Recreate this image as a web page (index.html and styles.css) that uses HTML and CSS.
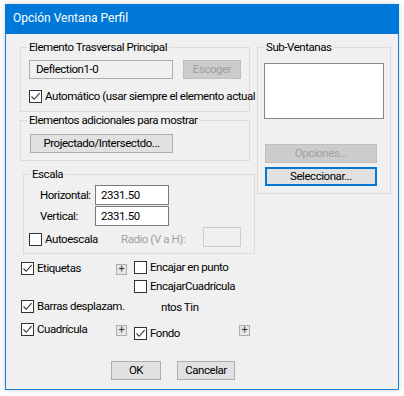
FILE: index.html
```html
<!DOCTYPE html>
<html lang="es">
<head>
<meta charset="utf-8">
<title>Opción Ventana Perfil</title>
<link rel="stylesheet" href="styles.css">
</head>
<body>
<div class="window">
  <div class="titlebar">Opción Ventana Perfil</div>
  <div class="client">
    <div class="top">
      <div class="leftcol">
        <fieldset class="group g1">
          <legend>Elemento Trasversal Principal</legend>
          <div class="elem-row">
            <div class="edit ro elem-edit">Deflection1-0</div>
            <div class="btn disabled escoger">Escoger</div>
          </div>
          <div class="check auto"><span class="box on"></span><span class="lbl">Automático (usar siempre el elemento actual</span></div>
        </fieldset>
        <fieldset class="group g2">
          <legend>Elementos adicionales para mostrar</legend>
          <div class="btn proj">Projectado/Intersectdo...</div>
        </fieldset>
        <fieldset class="group g3">
          <legend>Escala</legend>
          <div class="scale-row first">
            <span class="scale-lbl">Horizontal:</span>
            <div class="edit num">2331.50</div>
          </div>
          <div class="scale-row">
            <span class="scale-lbl">Vertical:</span>
            <div class="edit num">2331.50</div>
          </div>
          <div class="auto-row">
            <div class="check autoesc"><span class="box"></span><span class="lbl">Autoescala</span></div>
            <span class="radio-lbl">Radio (V a H):</span>
            <div class="edit dis-edit"></div>
          </div>
        </fieldset>
      </div>
      <div class="rightcol">
        <fieldset class="group g4">
          <legend>Sub-Ventanas</legend>
          <div class="listbox"></div>
          <div class="btn disabled wide opciones">Opciones...</div>
          <div class="btn focus wide selec">Seleccionar...</div>
        </fieldset>
      </div>
    </div>
    <div class="opts">
      <div class="opt-row r1">
        <div class="cell c1"><div class="check"><span class="box on"></span><span class="lbl">Etiquetas</span></div></div>
        <div class="cell c2"><span class="plus">+</span></div>
        <div class="cell c3 up1"><div class="check"><span class="box"></span><span class="lbl">Encajar en punto</span></div></div>
      </div>
      <div class="opt-row r2">
        <div class="cell c3"><div class="check"><span class="box"></span><span class="lbl">EncajarCuadrícula</span></div></div>
      </div>
      <div class="opt-row r3">
        <div class="cell c1w"><div class="check"><span class="box on"></span><span class="lbl">Barras desplazam.</span></div></div>
        <div class="cell"><span class="plain">ntos Tin</span></div>
      </div>
      <div class="opt-row r4">
        <div class="cell c1"><div class="check"><span class="box on"></span><span class="lbl">Cuadrícula</span></div></div>
        <div class="cell c2"><span class="plus">+</span></div>
        <div class="cell c3f"><div class="check down4"><span class="box on"></span><span class="lbl">Fondo</span></div></div>
        <div class="cell"><span class="plus plus2">+</span></div>
      </div>
    </div>
    <div class="actions">
      <div class="btn ok">OK</div>
      <div class="btn cancel">Cancelar</div>
    </div>
  </div>
</div>
</body>
</html>
```

FILE: styles.css
```css
* { box-sizing: border-box; }

html, body {
  margin: 0;
  padding: 0;
  background: #ffffff;
}

body {
  font-family: "Segoe UI", Roboto, "Liberation Sans", sans-serif;
  font-size: 12px;
  color: #000;
  width: 404px;
  height: 396px;
  overflow: hidden;
}

.window {
  width: 394px;
  height: 386px;
  margin: 4px 0 0 5px;
  border: 1px solid #1a7fd4;
  background: #f0f0f0;
  box-shadow: 0 0 6px rgba(0, 0, 0, 0.18);
  display: flex;
  flex-direction: column;
}

.titlebar {
  height: 30px;
  background: #0078d7;
  color: #fff;
  font-size: 12px;
  line-height: 29px;
  padding-left: 8px;
  margin: -1px -1px 0 -1px;
}

.client {
  flex: 1;
  background: #f0f0f0;
  display: flex;
  flex-direction: column;
  font-size: 11.5px;
  letter-spacing: -0.45px;
}

.top {
  display: flex;
  padding-top: 6px;
}

.leftcol {
  width: 237px;
  margin-left: 14px;
  display: flex;
  flex-direction: column;
}

.group {
  margin: 0;
  padding: 0;
  border: 1px solid #dcdcdc;
  min-width: 0;
  overflow: visible;
}

.group legend {
  margin-left: 6px;
  padding: 0 2px;
  line-height: 15px;
  height: 15px;
}

.g1 { width: 230px; height: 72px; position: relative; z-index: 1; }
.g2 { width: 230px; height: 48px; margin-top: 1px; }
.g3 { width: 232px; height: 87px; margin-top: 6px; margin-left: 3px; }
.g4 { width: 134px; height: 154px; }

.elem-row {
  display: flex;
  margin-top: 5px;
  padding-left: 8px;
}

.edit {
  height: 19px;
  border: 1px solid #7a7a7a;
  background: #fff;
  line-height: 17px;
  padding-left: 4px;
  white-space: nowrap;
}

.edit.ro {
  background: #f0f0f0;
  border-color: #adadad;
}

.elem-edit { width: 144px; padding-left: 6px; }

.btn {
  height: 19px;
  border: 1px solid #adadad;
  background: #e1e1e1;
  text-align: center;
  line-height: 17px;
  white-space: nowrap;
}

.btn.disabled {
  background: #cccccc;
  border-color: #bfbfbf;
  color: #a0a0a0;
}

.btn.focus {
  border: 2px solid #0078d7;
  line-height: 15px;
}

.escoger { width: 58px; margin-left: 10px; }

.check {
  display: flex;
  align-items: center;
  height: 13px;
  white-space: nowrap;
}

.box {
  width: 13px;
  height: 13px;
  flex: none;
  border: 1px solid #333;
  background: #fff;
  margin-right: 3px;
}

.box.on {
  background: #fff url("data:image/svg+xml;utf8,<svg xmlns='http://www.w3.org/2000/svg' width='11' height='11'><path d='M1.5 5.5 L4.2 8.3 L9.6 2.2' fill='none' stroke='%23333' stroke-width='1.1'/></svg>") no-repeat center;
}

.lbl { line-height: 15px; }

.auto {
  margin-top: 11px;
  margin-left: 8px;
  width: 260px;
}

.proj {
  width: 143px;
  margin-top: 6px;
  margin-left: 9px;
}

.scale-row {
  display: flex;
  align-items: center;
  padding-left: 16px;
  margin-top: 1px;
}

.scale-row.first { margin-top: 3px; }

.scale-lbl { width: 55px; }

.num { width: 74px; height: 20px; line-height: 18px; padding-left: 5px; }

.auto-row {
  display: flex;
  align-items: flex-start;
  margin-top: 1px;
  padding-left: 5px;
}

.autoesc { margin-top: 6px; width: 92px; }

.radio-lbl {
  color: #a0a0a0;
  margin-top: 5px;
  line-height: 15px;
  width: 82px;
}

.dis-edit {
  width: 38px;
  height: 20px;
  border-color: #cccccc;
  background: #f0f0f0;
}

.listbox {
  width: 120px;
  height: 56px;
  margin-top: 8px;
  margin-left: 6px;
  border: 1px solid #828790;
  background: #fff;
}

.wide { width: 112px; margin-left: 7px; }
.opciones { margin-top: 25px; }
.selec { margin-top: 4px; }

.opts {
  padding-left: 15px;
  margin-top: 8px;
}

.opt-row {
  display: flex;
  align-items: flex-start;
  height: 13px;
}

.cell { flex: none; }
.c1 { width: 95px; }
.c1w { width: 140px; }
.c2 { width: 18px; padding-top: 2px; }
.c3 { width: 120px; }
.c3f { width: 105px; }
.up1 { margin-top: -1px; }
.down4 { margin-top: 4px; }

.r2 { margin-top: 5px; padding-left: 113px; }
.r3 { margin-top: 7px; }
.r4 { margin-top: 10px; }

.plain { line-height: 15px; display: block; }

.plus {
  display: block;
  width: 11px;
  height: 11px;
  border: 1px solid #adadad;
  background: #e5e5e5;
  font-size: 11px;
  line-height: 8px;
  text-align: center;
  color: #333;
  letter-spacing: 0;
}

.plus2 { margin-top: 2px; }

.actions {
  display: flex;
  gap: 16px;
  padding-left: 105px;
  margin-top: 25px;
}

.ok { width: 50px; }
.cancel { width: 58px; }
```
